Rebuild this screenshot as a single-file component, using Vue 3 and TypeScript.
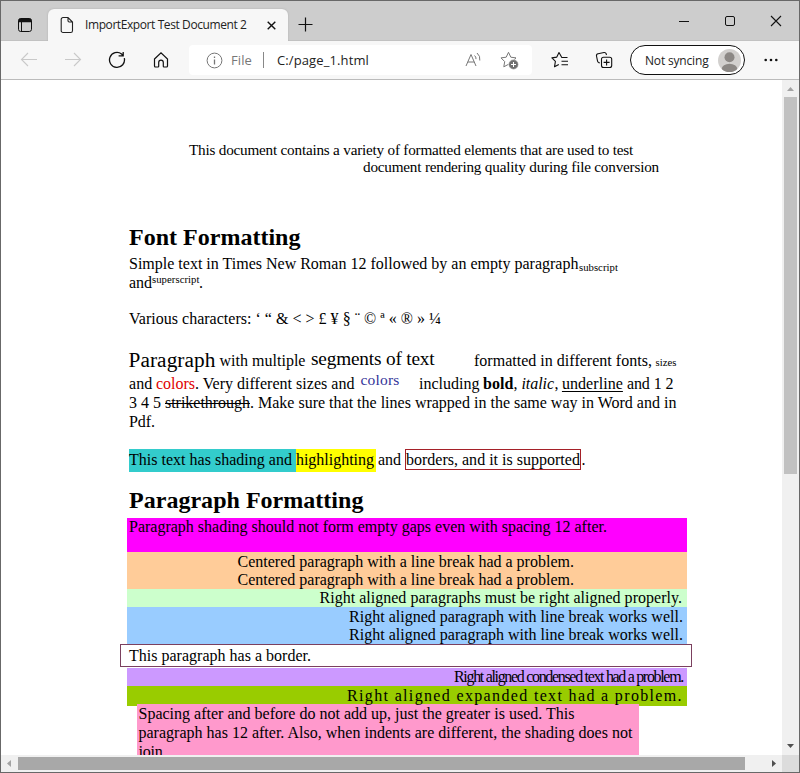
<script setup lang="ts">
interface Run {
  text: string
  /** left edge, measured from the left side of the window */
  x: number
  /** advance width of the run */
  w: number
  kind?: string
}
interface Line {
  runs: Run[]
  kind?: string
}
interface Block {
  kind: string
  left: number
  lines: Line[]
}

const one = (text: string, x: number, w: number, kind = ''): Line => ({ runs: [{ text, x, w }], kind })

const blocks: Block[] = [
  {
    kind: 'intro',
    left: 129,
    lines: [
      one('This document contains a variety of formatted elements that are used to test', 189, 444),
      one('document rendering quality during file conversion', 363, 296),
    ],
  },
  { kind: 'heading first', left: 129, lines: [one('Font Formatting', 129, 171.5)] },
  {
    kind: 'simple',
    left: 129,
    lines: [
      {
        runs: [
          { text: 'Simple text in Times New Roman 12 followed by an empty paragraph', x: 129, w: 449.5 },
          { text: 'subscript', x: 579, w: 39, kind: 'sub' },
        ],
      },
      {
        runs: [
          { text: 'and', x: 129, w: 23 },
          { text: 'superscript', x: 152, w: 47.5, kind: 'sup' },
          { text: '.', x: 199, w: 4 },
        ],
      },
    ],
  },
  { kind: 'chars', left: 129, lines: [one('Various characters: ‘ “ & < > £ ¥ § ¨ © ª « ® » ¼', 129, 312)] },
  {
    kind: 'mixed',
    left: 129,
    lines: [
      {
        runs: [
          { text: 'Paragraph', x: 128.5, w: 87, kind: 'large' },
          { text: 'with multiple', x: 219.5, w: 86 },
          { text: 'segments of text', x: 311, w: 123.5, kind: 'medium' },
          { text: 'formatted in different fonts,', x: 474, w: 178 },
          { text: 'sizes', x: 655.5, w: 21, kind: 'tiny' },
        ],
      },
      {
        kind: 'after-large',
        runs: [
          { text: 'and', x: 129, w: 23.5 },
          { text: 'colors', x: 156, w: 39, kind: 'red' },
          { text: '. Very different sizes and', x: 195, w: 159.5 },
          { text: 'colors', x: 360.5, w: 39, kind: 'navy' },
          { text: 'including', x: 419, w: 60.5 },
          { text: 'bold', x: 483, w: 30.5, kind: 'bold' },
          { text: ',', x: 513.5, w: 4 },
          { text: 'italic', x: 521.5, w: 32.5, kind: 'italic' },
          { text: ',', x: 554.5, w: 4 },
          { text: 'underline', x: 562, w: 61, kind: 'underline' },
          { text: 'and 1 2', x: 627, w: 46.5 },
        ],
      },
      {
        kind: 'tall',
        runs: [
          { text: '3 4 5', x: 129, w: 32 },
          { text: 'strikethrough', x: 165, w: 85, kind: 'strike' },
          { text: '. Make sure that the lines wrapped in the same way in Word and in', x: 250, w: 426.5 },
        ],
      },
      one('Pdf.', 129, 26, 'tall'),
    ],
  },
  {
    kind: 'shaded',
    left: 129,
    lines: [
      {
        runs: [
          { text: 'This text has shading and ', x: 129, w: 167, kind: 'teal' },
          { text: 'highlighting', x: 296, w: 80, kind: 'yellow' },
          { text: 'and', x: 378, w: 23 },
          { text: 'borders, and it is supported', x: 405, w: 176, kind: 'boxed' },
          { text: '.', x: 581.5, w: 4 },
        ],
      },
    ],
  },
  { kind: 'heading second', left: 129, lines: [one('Paragraph Formatting', 129, 234.5)] },
  {
    kind: 'band magenta',
    left: 127,
    lines: [one('Paragraph shading should not form empty gaps even with spacing 12 after.', 129, 478)],
  },
  {
    kind: 'band orange',
    left: 127,
    lines: [
      one('Centered paragraph with a line break had a problem.', 237.5, 336.5),
      one('Centered paragraph with a line break had a problem.', 237.5, 336.5),
    ],
  },
  {
    kind: 'band mint',
    left: 127,
    lines: [one('Right aligned paragraphs must be right aligned properly.', 319.5, 362.5)],
  },
  {
    kind: 'band blue',
    left: 127,
    lines: [
      one('Right aligned paragraph with line break works well.', 349, 334),
      one('Right aligned paragraph with line break works well.', 349, 334),
    ],
  },
  { kind: 'outlined', left: 121, lines: [one('This paragraph has a border.', 129, 182)] },
  {
    kind: 'band violet',
    left: 127,
    lines: [one('Right aligned condensed text had a problem.', 454, 229)],
  },
  {
    kind: 'band green',
    left: 127,
    lines: [one('Right aligned expanded text had a problem.', 347, 336)],
  },
  {
    kind: 'band pink',
    left: 137,
    lines: [
      one('Spacing after and before do not add up, just the greater is used. This', 138.5, 436),
      one('paragraph has 12 after. Also, when indents are different, the shading does not', 138.5, 494, 'tall'),
      one('join.', 138.5, 28),
    ],
  },
]

function gapBefore(block: Block, line: Line, i: number): string {
  const prev = i === 0 ? block.left : line.runs[i - 1].x + line.runs[i - 1].w
  return `${line.runs[i].x - prev}px`
}

/** Tracks the text so that the element takes exactly the given width. */
const vFit = {
  mounted(el: HTMLElement, binding: { value: number }) {
    el.style.letterSpacing = '0.001px'
    const natural = el.getBoundingClientRect().width
    const count = (el.textContent ?? '').length
    el.style.letterSpacing = `${(binding.value - natural) / count}px`
  },
}
</script>

<template>
  <div class="window">
    <header class="tabs">
      <svg class="workspaces" width="16" height="16" viewBox="0 0 16 16">
        <rect x="1.5" y="1.5" width="13" height="13" rx="2.2" fill="none" stroke="#111" />
        <path d="M1.5 5.3V3.5a2 2 0 0 1 2-2h9a2 2 0 0 1 2 2v1.8z" fill="#111" />
        <path d="M4.5 5v9.5" stroke="#111" />
      </svg>
      <div class="tab">
        <svg width="14" height="18" viewBox="0 0 14 18" fill="none" stroke="#222" stroke-width="1.1">
          <path d="M3 1.5h5l4.5 4.5v8.7a1.8 1.8 0 0 1-1.8 1.8H3a1.8 1.8 0 0 1-1.8-1.8V3.3A1.8 1.8 0 0 1 3 1.5zM8 1.5V4.8A1.2 1.2 0 0 0 9.2 6h3.3" />
        </svg>
        <span class="tab-title"><span v-fit="161.5">ImportExport Test Document 2</span></span>
        <svg class="tab-close" width="9" height="9" viewBox="0 0 9 9" stroke="#111" stroke-width="1.4">
          <path d="M.7.7l7.6 7.6M8.3.7L.7 8.3" />
        </svg>
      </div>
      <svg class="new-tab" width="15" height="15" viewBox="0 0 15 15" stroke="#111" stroke-width="1.2">
        <path d="M7.5.5v14M.5 7.5h14" />
      </svg>
      <div class="controls">
        <svg width="12" height="12" viewBox="0 0 12 12" stroke="#111"><path d="M1 6.5h10" /></svg>
        <svg width="12" height="12" viewBox="0 0 12 12" fill="none" stroke="#111">
          <rect x="1.5" y="1.5" width="9" height="9" rx="1.5" />
        </svg>
        <svg width="12" height="12" viewBox="0 0 12 12" stroke="#111" stroke-width="1.1">
          <path d="M1 1l10 10M11 1L1 11" />
        </svg>
      </div>
    </header>

    <nav class="toolbar">
      <svg class="back" width="18" height="16" viewBox="0 0 18 16" fill="none" stroke="#c9c9c9" stroke-width="1.1">
        <path d="M8 1L1.5 7.5 8 14M1.5 7.5H17" />
      </svg>
      <svg class="forward" width="18" height="16" viewBox="0 0 18 16" fill="none" stroke="#c9c9c9" stroke-width="1.1">
        <path d="M10 1l6.5 6.5L10 14M16.5 7.5H1" />
      </svg>
      <svg class="reload" width="18" height="18" viewBox="0 0 18 18" fill="none" stroke="#111" stroke-width="1.3">
        <path d="M16.3 7.2A7.5 7.5 0 1 1 13.6 3L15 4.5M15.2 1v3.9h-4.6" />
      </svg>
      <svg class="home" width="16" height="18" viewBox="0 0 16 18" fill="none" stroke="#111" stroke-width="1.2">
        <path d="M1.5 8L8 1.8 14.5 8v7a1 1 0 0 1-1 1H11a.7.7 0 0 1-.7-.7V11.5a2.3 2.3 0 0 0-4.6 0v3.8a.7.7 0 0 1-.7.7H2.5a1 1 0 0 1-1-1z" />
      </svg>
      <div class="address">
        <svg width="17" height="17" viewBox="0 0 17 17" fill="none" stroke="#777">
          <circle cx="8.5" cy="8.5" r="7.4" />
          <path d="M8.5 7.5v5M8.5 4.5v1.5" stroke-width="1.3" />
        </svg>
        <span class="scheme"><span v-fit="21">File</span></span>
        <span class="divider"></span>
        <span class="path"><span v-fit="92">C:/page_1.html</span></span>
        <svg class="read-aloud" width="17" height="16" viewBox="0 0 17 16" fill="none" stroke="#777">
          <path d="M1 14L6 2.5 11 14M2.8 10h6.4M9.5 3.5a4 4 0 0 1 1.5 3.6M12 1a8 8 0 0 1 2.8 7.5" />
        </svg>
        <svg class="add-favorite" width="19" height="19" viewBox="0 0 19 19">
          <path d="M8.5 1.3l2.3 4.9 5.2.7-3.8 3.7.9 5.2-4.6-2.5-4.7 2.5.9-5.2L1 6.9l5.2-.7z" fill="none" stroke="#777" stroke-linejoin="round" />
          <circle cx="13.5" cy="13.5" r="4.9" fill="#6e6e6e" stroke="#fff" stroke-width=".6" />
          <path d="M11 13.5h5M13.5 11v5" stroke="#fff" />
        </svg>
      </div>
      <svg class="favorites" width="18" height="18" viewBox="0 0 18 18" fill="none" stroke="#111" stroke-width="1.1" stroke-linejoin="round">
        <path d="M16.5 6.5H10.8L8 1.5 5.8 6.1.9 6.9l3.5 3.5-.9 5.4 4.3-2.3M10.5 10.3h6.5M10.5 13.8h6.5" />
      </svg>
      <svg class="collections" width="18" height="18" viewBox="0 0 18 18" fill="none" stroke="#111" stroke-width="1.1">
        <path d="M4.8 12L3.5 11.4a2 2 0 0 1-1-1.5L1.5 5a2 2 0 0 1 1.6-2.3l5.9-1.2a2 2 0 0 1 2.2 1.3L11.5 4" />
        <rect x="6.5" y="6.3" width="10.2" height="10.2" rx="2" />
        <path d="M11.6 8.4v6M8.6 11.4h6" />
      </svg>
      <div class="profile">
        <span class="sync"><span v-fit="63.5">Not syncing</span></span>
        <svg width="23" height="23" viewBox="0 0 23 23">
          <defs><clipPath id="face"><circle cx="11.5" cy="11.5" r="11.5" /></clipPath></defs>
          <g clip-path="url(#face)">
            <rect width="23" height="23" fill="#d2d0ce" />
            <circle cx="11.5" cy="8.3" r="5" fill="#8c8885" />
            <ellipse cx="11.5" cy="20" rx="7.8" ry="5.2" fill="#8c8885" />
          </g>
        </svg>
      </div>
      <svg class="more" width="14" height="4" viewBox="0 0 14 4" fill="#111">
        <circle cx="1.7" cy="2" r="1.3" /><circle cx="7" cy="2" r="1.3" /><circle cx="12.3" cy="2" r="1.3" />
      </svg>
    </nav>

    <div class="view">
      <main class="page">
        <section v-for="(block, b) in blocks" :key="b" :class="['block', block.kind]">
          <div v-for="(line, l) in block.lines" :key="l" :class="['line', line.kind]">
            <span
              v-for="(run, r) in line.runs"
              :key="r"
              v-fit="run.w"
              :class="run.kind"
              :style="{ marginLeft: gapBefore(block, line, r) }"
            >{{ run.text }}</span>
          </div>
        </section>
      </main>
      <aside class="vbar">
        <svg width="7" height="4" viewBox="0 0 7 4" fill="#a3a3a3"><path d="M3.5 0L7 4H0z" /></svg>
        <div class="vthumb"></div>
        <svg class="down" width="7" height="4" viewBox="0 0 7 4" fill="#505050"><path d="M3.5 4L7 0H0z" /></svg>
      </aside>
      <footer class="hbar">
        <svg width="4" height="7" viewBox="0 0 4 7" fill="#a3a3a3"><path d="M0 3.5L4 0v7z" /></svg>
        <div class="hthumb"></div>
        <svg class="right" width="4" height="7" viewBox="0 0 4 7" fill="#505050"><path d="M4 3.5L0 0v7z" /></svg>
      </footer>
      <div class="corner"></div>
    </div>
  </div>
</template>

<style>
body {
  margin: 0;
  overflow: hidden;
}
</style>

<style scoped>
.window {
  box-sizing: border-box;
  width: 800px;
  height: 773px;
  border: 1px solid #686868;
  display: flex;
  flex-direction: column;
  background: #fff;
  font-family: 'Open Sans', 'Noto Sans', sans-serif;
  font-size: 12px;
  color: #222;
}
svg {
  display: block;
  flex: none;
}
.tabs {
  height: 40px;
  display: flex;
  align-items: flex-start;
  background: #cdcdcd;
  box-shadow: inset 0 -1px #c2c2c2;
}
.workspaces {
  margin: 16px 0 0 16px;
}
.tab {
  box-sizing: border-box;
  width: 240px;
  height: 32px;
  margin: 8px 0 0 15px;
  padding: 0 12px;
  border-radius: 6px 6px 0 0;
  background: #f7f7f7;
  box-shadow: 0 0 2px #aaa;
  clip-path: inset(-3px -3px 0 -3px);
  display: flex;
  align-items: center;
}
.tab-title {
  width: 186px;
  margin-left: 11px;
  padding-bottom: 1px;
  white-space: nowrap;
}
.tab-close {
  margin-left: -4px;
}
.new-tab {
  margin: 16px 0 0 10px;
}
.controls {
  display: flex;
  gap: 34px;
  margin: 14px 0 0 auto;
  padding-right: 17px;
}
.toolbar {
  height: 38px;
  display: flex;
  align-items: center;
  background: #f7f7f7;
  border-bottom: 1px solid #bbb;
}
.back {
  margin-left: 19px;
}
.forward {
  margin-left: 26px;
}
.reload {
  margin-left: 26px;
}
.home {
  margin-left: 27px;
}
.address {
  box-sizing: border-box;
  width: 343px;
  height: 30px;
  margin-left: 20px;
  padding-left: 17px;
  border-radius: 4px;
  background: #fff;
  display: flex;
  align-items: center;
  white-space: nowrap;
  font-size: 13px;
}
.scheme {
  width: 32px;
  margin-left: 8px;
  color: #777;
}
.divider {
  width: 1px;
  height: 16px;
  background: #888;
}
.path {
  width: 92px;
  margin-left: 13px;
}
.read-aloud {
  margin-left: 96px;
}
.add-favorite {
  margin: 1px 0 0 18px;
}
.favorites {
  margin-left: 19px;
}
.collections {
  margin-left: 26px;
}
.profile {
  box-sizing: border-box;
  width: 115px;
  height: 30px;
  margin-left: 17px;
  padding: 0 3px 0 14px;
  border: 1px solid #111;
  border-radius: 15px;
  background: #fff;
  display: flex;
  align-items: center;
  justify-content: space-between;
  white-space: nowrap;
}
.more {
  margin-left: 19px;
}

.view {
  flex: 1;
  min-height: 0;
  display: grid;
  grid-template: 675px 17px / 781px 17px;
}
.page {
  overflow: hidden;
  font-family: 'Liberation Serif', 'Times New Roman', serif;
  font-size: 16px;
  color: #000;
  padding-top: 61px;
  box-sizing: border-box;
}
.block {
  margin-left: 128px;
}
.line {
  height: 18px;
  line-height: 18px;
  white-space: pre;
}
.tall {
  height: 19px;
}
.intro {
  font-size: 15.2px;
}
.intro .line {
  height: 17px;
}
.heading {
  font-size: 24px;
  font-weight: bold;
}
.heading .line {
  height: 26px;
  line-height: 26px;
}
.first {
  margin-top: 49px;
}
.simple {
  margin-top: 5px;
}
.simple .line {
  height: 19px;
}
.chars {
  margin-top: 17px;
}
.mixed {
  margin-top: 24px;
}
.mixed .line:first-child {
  height: 23px;
}
.mixed .line:nth-child(2) {
  height: 19px;
}
.shaded {
  margin-top: 19px;
}
.second {
  margin-top: 18px;
}
.sub {
  font-size: 10.7px;
  line-height: 0;
  vertical-align: -2px;
}
.sup {
  font-size: 10.7px;
  line-height: 0;
  vertical-align: 5px;
}
.large {
  font-size: 21.3px;
  line-height: 0;
  vertical-align: -1px;
}
.medium {
  font-size: 19.3px;
  line-height: 0;
  vertical-align: 1px;
}
.tiny {
  font-size: 10.7px;
  line-height: 0;
}
.red {
  color: #e00000;
}
.navy {
  color: #333399;
  font-size: 15.5px;
  line-height: 0;
  vertical-align: 4px;
}
.bold {
  font-weight: bold;
}
.italic {
  font-style: italic;
}
.underline {
  text-decoration: underline;
  text-underline-offset: 2px;
}
.strike {
  text-decoration: line-through;
}
.teal {
  background: #33cccc;
  padding: 2px 0 4px;
}
.yellow {
  background: #ffff00;
  padding: 2px 2px 4px 0;
}
.boxed {
  border: 1px solid #a52028;
  padding: 1px 0;
}
.band {
  box-sizing: border-box;
  width: 560px;
  margin-left: 126px;
}
.magenta {
  height: 34px;
  background: #ff00ff;
  margin-top: 5px;
}
.orange {
  height: 37px;
  padding-top: 1px;
  background: #ffcc99;
}
.mint {
  height: 18px;
  background: #ccffcc;
}
.blue {
  height: 37px;
  padding-top: 1px;
  background: #99ccff;
}
.outlined {
  box-sizing: border-box;
  width: 572px;
  height: 23px;
  margin-left: 119px;
  padding-top: 2px;
  border: 1px solid #7b405f;
}
.violet {
  height: 18px;
  margin-top: 1px;
  background: #cc99ff;
}
.green {
  height: 20px;
  padding-top: 1px;
  background: #99cc00;
}
.pink {
  width: 502px;
  height: 70px;
  margin: -2px 0 0 136px;
  padding-top: 1px;
  background: #ff99cc;
}
.pink .line:first-child {
  height: 19px;
}

.vbar {
  background: #f0f0f0;
  display: flex;
  flex-direction: column;
  align-items: center;
  padding: 7px 0;
}
.vthumb {
  width: 13px;
  height: 377px;
  margin-top: 6px;
  background: #c1c1c1;
}
.down {
  margin-top: auto;
}
.hbar {
  background: #f0f0f0;
  display: flex;
  align-items: center;
  padding: 0 6px 0 6px;
}
.hthumb {
  width: 727px;
  height: 13px;
  margin-left: 7px;
  background: #a8a8a8;
}
.right {
  margin-left: auto;
}
.corner {
  background: #dcdcdc;
}
</style>
